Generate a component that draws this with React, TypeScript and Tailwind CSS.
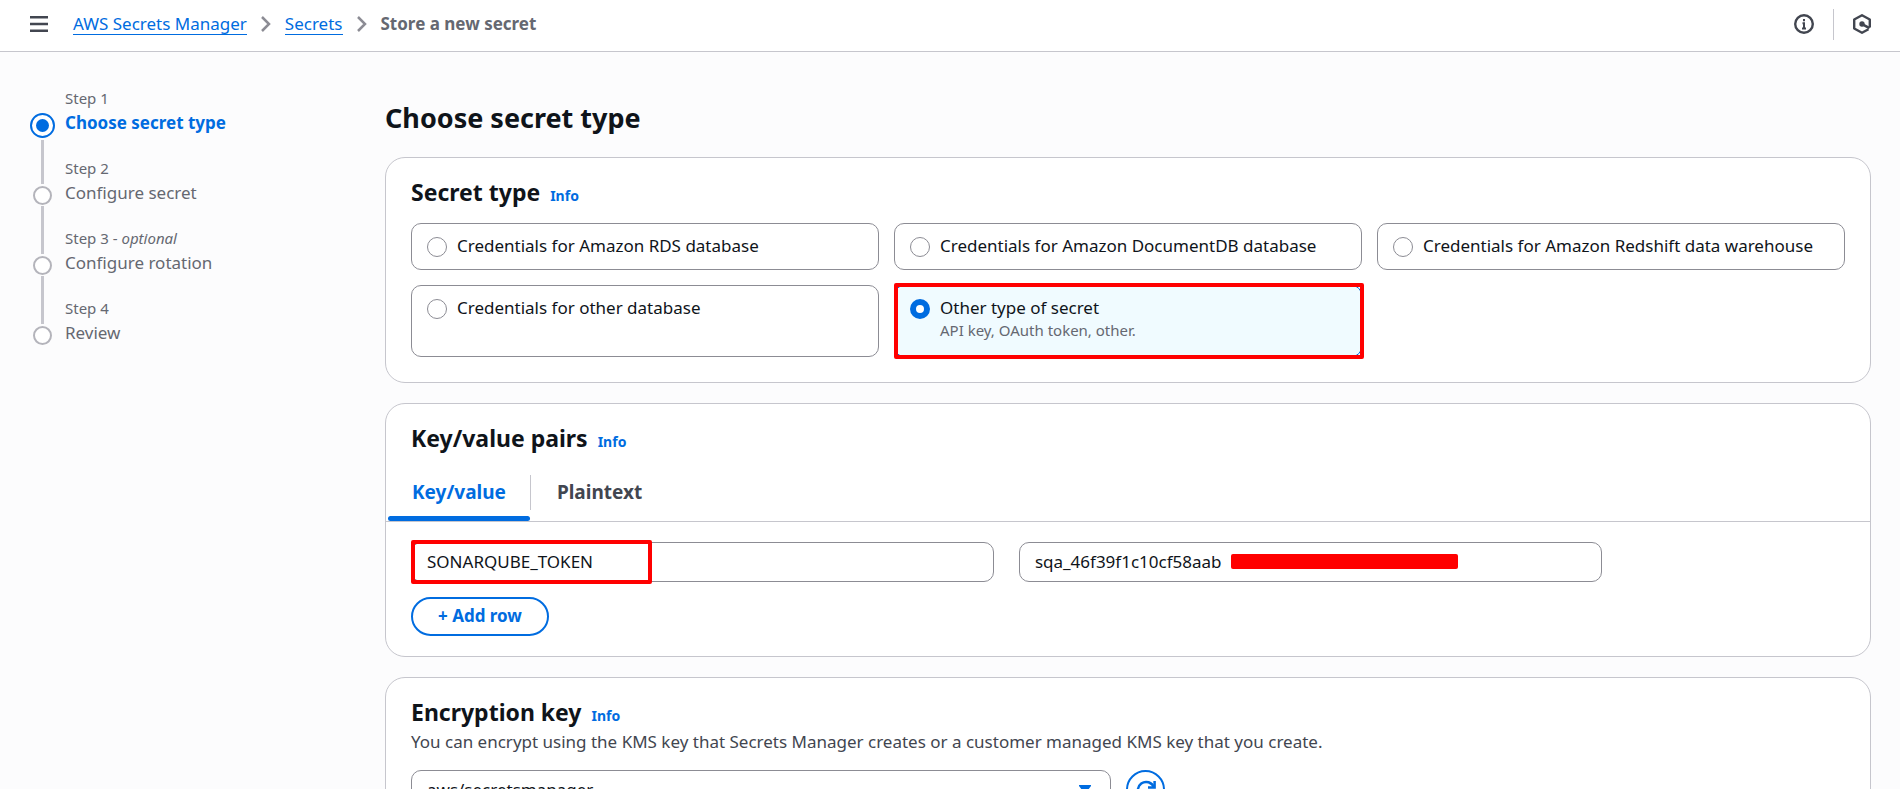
import { useState } from 'react';
import type { ReactNode } from 'react';

interface Step {
  label: string;
  title: string;
  optional?: boolean;
}

interface SecretType {
  id: string;
  label: string;
  description?: string;
}

const steps: Step[] = [
  { label: 'Step 1', title: 'Choose secret type' },
  { label: 'Step 2', title: 'Configure secret' },
  { label: 'Step 3', title: 'Configure rotation', optional: true },
  { label: 'Step 4', title: 'Review' },
];

const secretTypes: SecretType[] = [
  { id: 'rds', label: 'Credentials for Amazon RDS database' },
  { id: 'documentdb', label: 'Credentials for Amazon DocumentDB database' },
  { id: 'redshift', label: 'Credentials for Amazon Redshift data warehouse' },
  { id: 'database', label: 'Credentials for other database' },
  { id: 'other', label: 'Other type of secret', description: 'API key, OAuth token, other.' },
];

function Chevron() {
  return (
    <svg width="10" height="16" viewBox="0 0 10 16" fill="none" stroke="#8c8c94" strokeWidth="2.5" aria-hidden="true">
      <path d="M1 1l7 7-7 7" />
    </svg>
  );
}

function TopBar() {
  return (
    <header className="flex h-[52px] shrink-0 items-center border-b border-[#c6c6cd] bg-white pr-[29px] pb-[3px] pl-[30px]">
      <button aria-label="Open menu" className="mr-[25px]">
        <svg width="18" height="16" viewBox="0 0 18 16" stroke="#424650" strokeWidth="2.4">
          <path d="M0 1.200h18M0 8h18M0 14.800h18" />
        </svg>
      </button>
      <nav aria-label="Breadcrumbs" className="flex items-center gap-[14px] text-[17px] leading-5">
        <a href="#manager" className="border-b border-[#006ce0] text-[#006ce0]">AWS Secrets Manager</a>
        <Chevron />
        <a href="#secrets" className="border-b border-[#006ce0] text-[#006ce0]">Secrets</a>
        <Chevron />
        <span className="font-bold text-[#656871]">Store a new secret</span>
      </nav>
      <div className="ml-auto flex items-center">
        <button aria-label="Info">
          <svg width="20" height="20" viewBox="0 0 20 20" fill="none" stroke="#424650">
            <circle cx="10" cy="10" r="8.8" strokeWidth="2.4" />
            <path d="M10 5v2.2M8.500 9.200H10V15M8 14.500h4" strokeWidth="2" />
          </svg>
        </button>
        <span className="mx-[19px] h-[31px] w-px bg-[#c6c6cd]" />
        <button aria-label="Amazon Q">
          <svg width="18" height="20" viewBox="0 0 18 20" fill="none" stroke="#424650">
            <path d="M16.800 13.500v-8L9 1.200 1.200 5.500v9L9 18.800l6.500-3.600" strokeWidth="2.4" strokeLinejoin="round" />
            <circle cx="9" cy="10" r="2.7" fill="#424650" stroke="none" />
            <path d="M9.500 10.300L16.500 14.200" strokeWidth="2.6" />
          </svg>
        </button>
      </div>
    </header>
  );
}

function StepNav() {
  return (
    <nav aria-label="Steps" className="w-[355px] shrink-0 pt-[37px]">
      <ol>
        {steps.map((step, i) => {
          const active = i === 0;
          const last = i === steps.length - 1;
          return (
            <li key={step.label} className="flex gap-[10px]">
              <div className="flex w-[25px] flex-col items-center">
                <span className={active ? 'h-[25px]' : 'h-[25px] w-[3px] bg-[#c6c6cd]'} />
                <span className="flex h-[22px] shrink-0 items-center">
                  {active ? (
                    <span className="flex size-[25px] shrink-0 items-center justify-center rounded-full border-2 border-[#006ce0] bg-white">
                      <span className="size-[13px] rounded-full bg-[#006ce0]" />
                    </span>
                  ) : (
                    <span className="size-[19px] rounded-full border-2 border-[#b4b4bb] bg-white" />
                  )}
                </span>
                {!last && <span className={active ? 'mt-1 w-[3px] grow bg-[#c6c6cd]' : 'w-[3px] grow bg-[#c6c6cd]'} />}
              </div>
              <div className={last ? '' : 'pb-6'}>
                <p className="pb-1 text-[15px] leading-[18px] text-[#656871]">
                  {step.label}
                  {step.optional && (
                    <>
                      {' - '}
                      <i>optional</i>
                    </>
                  )}
                </p>
                {active ? (
                  <p className="text-[17px] leading-6 font-bold text-[#006ce0]">{step.title}</p>
                ) : (
                  <p className="text-[17px] leading-6 text-[#656871]">{step.title}</p>
                )}
              </div>
            </li>
          );
        })}
      </ol>
    </nav>
  );
}

function Card({ title, children }: { title: string; children: ReactNode }) {
  return (
    <section className="rounded-[20px] border border-[#c6c6cd] bg-white pt-[19px]">
      <div className="flex h-[31px] items-baseline gap-[10px] px-[25px]">
        <h2 className="text-[23px] leading-[30px] font-bold">{title}</h2>
        <a href="#info" className="text-sm font-bold text-[#006ce0]">Info</a>
      </div>
      {children}
    </section>
  );
}

function SecretTypeCard() {
  const [selected, setSelected] = useState('other');

  return (
    <Card title="Secret type">
      <div role="radiogroup" aria-label="Secret type" className="grid grid-cols-3 gap-[15px] px-[25px] pt-[15px] pb-[25px]">
        {secretTypes.map((type) => {
          const checked = type.id === selected;
          return (
            <label
              key={type.id}
              className={
                checked
                  ? 'relative flex gap-[10px] rounded-[10px] border border-[#006ce0] bg-[#f0fbff] px-[15px] pt-[9px] pb-[11px]'
                  : 'relative flex gap-[10px] rounded-[10px] border border-[#8c8c94] bg-white px-[15px] pt-[9px] pb-[11px]'
              }
            >
              <input
                type="radio"
                name="secret-type"
                checked={checked}
                onChange={() => setSelected(type.id)}
                className="mt-1 size-5 shrink-0 appearance-none rounded-full border border-[#8c8c94] bg-white checked:border-[6px] checked:border-[#006ce0]"
              />
              <span>
                <span className="block text-[17px] leading-[25px]">{type.label}</span>
                {type.description && (
                  <span className="block pb-[5px] text-[15px] leading-5 text-[#656871]">{type.description}</span>
                )}
              </span>
              {type.id === 'other' && (
                <span className="pointer-events-none absolute -inset-y-[3px] -left-px -right-[3px] rounded-xs border-4 border-[#ff0000]" />
              )}
            </label>
          );
        })}
      </div>
    </Card>
  );
}

function KeyValueCard() {
  const [name, setName] = useState('SONARQUBE_TOKEN');
  const [value, setValue] = useState('sqa_46f39f1c10cf58aab');

  return (
    <Card title="Key/value pairs">
      <div role="tablist" className="mt-[10px] flex h-[58px] items-stretch border-b border-[#c6c6cd] text-[19px] font-bold">
        <button role="tab" aria-selected="true" className="relative ml-0.5 px-6 text-[#006ce0]">
          Key/value
          <span className="absolute inset-x-0 bottom-0 h-[5px] rounded-sm bg-[#006ce0]" />
        </button>
        <span className="h-[35px] w-px self-center bg-[#c6c6cd]" />
        <button role="tab" aria-selected="false" className="px-[26px] text-[#424650]">Plaintext</button>
      </div>
      <div className="px-[25px] py-5">
        <div className="grid grid-cols-12 gap-[25px]">
          <div className="relative col-span-5">
            <input
              aria-label="Key"
              value={name}
              onChange={(e) => setName(e.target.value)}
              className="h-10 w-full rounded-[10px] border border-[#8c8c94] px-[15px] pb-0.5 text-[17px]"
            />
            <span className="pointer-events-none absolute -inset-y-0.5 left-0 w-[241px] rounded-xs border-4 border-[#ff0000]" />
          </div>
          <div className="relative col-span-5">
            <input
              aria-label="Value"
              value={value}
              onChange={(e) => setValue(e.target.value)}
              className="h-10 w-full rounded-[10px] border border-[#8c8c94] px-[15px] pb-0.5 text-[17px]"
            />
            <span className="pointer-events-none absolute top-3 left-[212px] h-[15px] w-[227px] rounded-xs bg-[#ff0000]" />
          </div>
        </div>
        <button className="mt-[15px] block h-[39px] rounded-full border-2 border-[#006ce0] px-[25px] pb-0.5 text-[17px] font-bold text-[#006ce0]">
          + Add row
        </button>
      </div>
    </Card>
  );
}

function EncryptionCard() {
  return (
    <Card title="Encryption key">
      <div className="px-[25px] pb-[25px]">
        <p className="pt-px text-[17px] leading-[25px] text-[#424650]">
          You can encrypt using the KMS key that Secrets Manager creates or a customer managed KMS key that you create.
        </p>
        <div className="mt-4 flex gap-[15px]">
          <div className="relative w-[700px]">
            <select
              aria-label="Encryption key"
              className="h-10 w-full appearance-none rounded-[10px] border border-[#8c8c94] bg-white px-[15px] text-[17px]"
            >
              <option>aws/secretsmanager</option>
            </select>
            <svg className="pointer-events-none absolute top-[15px] right-5" width="12" height="10" viewBox="0 0 12 10" fill="#006ce0">
              <path d="M0 0h12v1L6 9 0 1z" />
            </svg>
          </div>
          <button aria-label="Refresh" className="flex size-[39px] items-center justify-center rounded-full border-2 border-[#006ce0]">
            <svg width="20" height="20" viewBox="0 0 20 20" fill="none" stroke="#006ce0" strokeWidth="2.5">
              <path d="M18.600 1v6.500H12" />
              <path d="M18 7.500A8.300 8.300 0 1 0 18 13" />
            </svg>
          </button>
        </div>
      </div>
    </Card>
  );
}

export default function App() {
  return (
    <div className="flex h-screen flex-col bg-[#fcfcfd] font-['Noto_Sans',sans-serif] text-[#0f141a]">
      <TopBar />
      <div className="flex grow overflow-y-auto pr-[29px] pl-[30px]">
        <StepNav />
        <main className="min-w-0 grow pt-[46px]">
          <h1 className="mb-[19px] text-[27px] leading-10 font-bold">Choose secret type</h1>
          <div className="flex flex-col gap-5 pb-10">
            <SecretTypeCard />
            <KeyValueCard />
            <EncryptionCard />
          </div>
        </main>
      </div>
    </div>
  );
}
